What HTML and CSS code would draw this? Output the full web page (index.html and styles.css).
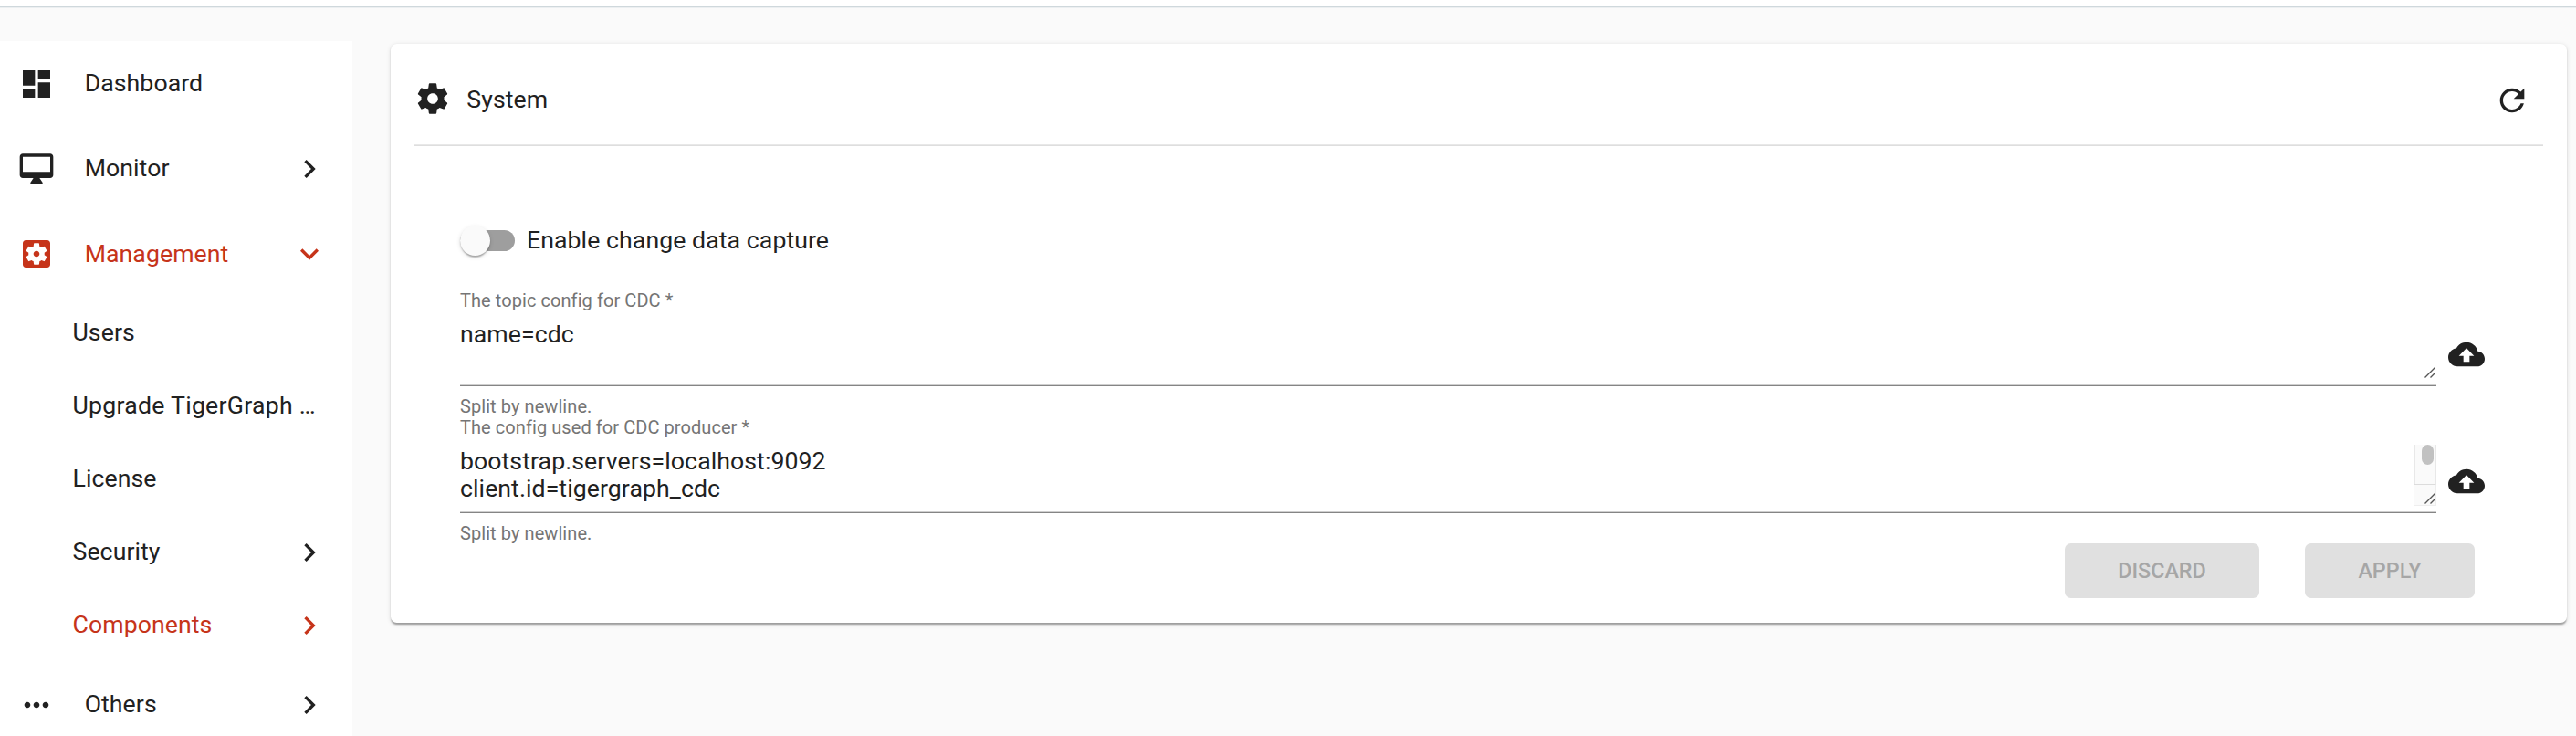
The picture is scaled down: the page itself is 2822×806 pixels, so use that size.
FILE: index.html
```html
<!DOCTYPE html>
<html lang="en">
<head>
<meta charset="utf-8">
<title>System</title>
<link rel="stylesheet" href="styles.css">
</head>
<body>
<svg class="defs" width="0" height="0">
  <symbol id="chev" viewBox="0 0 24 24"><path d="M10 6L8.59 7.41 13.17 12l-4.58 4.59L10 18l6-6z"/></symbol>
  <symbol id="down" viewBox="0 0 24 24"><path d="M16.59 8.59L12 13.17 7.41 8.59 6 10l6 6 6-6z"/></symbol>
  <symbol id="cloud" viewBox="0 0 24 24"><path d="M19.35 10.04C18.67 6.59 15.64 4 12 4 9.11 4 6.6 5.64 5.35 8.04 2.34 8.36 0 10.91 0 14c0 3.31 2.69 6 6 6h13c2.76 0 5-2.24 5-5 0-2.64-2.05-4.78-4.65-4.96zM14 13v4h-4v-4H7l5-5 5 5h-3z"/></symbol>
  <symbol id="grip" viewBox="0 0 12 12"><path d="M0.5 11.5L11.5 0.5M6.5 11.5L11.5 6.5" fill="none" stroke="#555" stroke-width="1.4"/></symbol>
</svg>
<header class="topbar"></header>
<div class="layout">
  <nav class="sidebar">
    <div class="item"><svg class="icon" viewBox="0 0 24 24"><path d="M3 13h8V3H3v10zm0 8h8v-6H3v6zm10 0h8V11h-8v10zm0-18v6h8V3h-8z"/></svg><span class="name">Dashboard</span></div>
    <div class="item"><svg class="icon" viewBox="0 0 24 24"><path d="M21 2H3c-1.1 0-2 .9-2 2v12c0 1.1.9 2 2 2h7l-2 3v1h8v-1l-2-3h7c1.1 0 2-.9 2-2V4c0-1.1-.9-2-2-2zm0 12H3V4h18v10z"/></svg><span class="name">Monitor</span><svg class="icon"><use href="#chev"/></svg></div>
    <div class="item active"><svg class="icon" viewBox="0 0 24 24"><path d="M12 10c-1.1 0-2 .9-2 2s.9 2 2 2 2-.9 2-2-.9-2-2-2zm7-7H5c-1.11 0-2 .9-2 2v14c0 1.1.89 2 2 2h14c1.11 0 2-.9 2-2V5c0-1.1-.89-2-2-2zm-1.75 9c0 .23-.02.46-.05.68l1.48 1.16c.13.11.17.3.08.45l-1.4 2.42c-.09.15-.27.21-.43.15l-1.74-.7c-.36.28-.76.51-1.18.69l-.26 1.85c-.03.17-.18.3-.35.3h-2.8c-.17 0-.32-.13-.35-.29l-.26-1.85c-.43-.18-.82-.41-1.18-.69l-1.74.7c-.16.06-.34 0-.43-.15l-1.4-2.42c-.09-.15-.05-.34.08-.45l1.48-1.16c-.03-.23-.05-.46-.05-.69 0-.23.02-.46.05-.68l-1.48-1.16c-.13-.11-.17-.3-.08-.45l1.4-2.42c.09-.15.27-.21.43-.15l1.74.7c.36-.28.76-.51 1.18-.69l.26-1.85c.03-.17.18-.3.35-.3h2.8c.17 0 .32.13.35.29l.26 1.85c.43.18.82.41 1.18.69l1.74-.7c.16-.06.34 0 .43.15l1.4 2.42c.09.15.05.34-.08.45l-1.48 1.16c.03.23.05.46.05.69z"/></svg><span class="name">Management</span><svg class="icon"><use href="#down"/></svg></div>
    <div class="item sub"><span class="name">Users</span></div>
    <div class="item sub"><span class="name wide">Upgrade TigerGraph …</span></div>
    <div class="item sub"><span class="name">License</span></div>
    <div class="item sub"><span class="name">Security</span><svg class="icon"><use href="#chev"/></svg></div>
    <div class="item sub active"><span class="name">Components</span><svg class="icon"><use href="#chev"/></svg></div>
    <div class="item"><svg class="icon" viewBox="0 0 24 24"><path d="M6 10c-1.1 0-2 .9-2 2s.9 2 2 2 2-.9 2-2-.9-2-2-2zm12 0c-1.1 0-2 .9-2 2s.9 2 2 2 2-.9 2-2-.9-2-2-2zm-6 0c-1.1 0-2 .9-2 2s.9 2 2 2 2-.9 2-2-.9-2-2-2z"/></svg><span class="name">Others</span><svg class="icon"><use href="#chev"/></svg></div>
  </nav>
  <main class="card">
    <div class="head">
      <svg class="icon" viewBox="0 0 24 24"><path d="M19.43 12.98c.04-.32.07-.64.07-.98s-.03-.66-.07-.98l2.11-1.65c.19-.15.24-.42.12-.64l-2-3.46c-.12-.22-.39-.3-.61-.22l-2.49 1c-.52-.4-1.08-.73-1.69-.98l-.38-2.65C14.46 2.18 14.25 2 14 2h-4c-.25 0-.46.18-.49.42l-.38 2.65c-.61.25-1.17.59-1.69.98l-2.49-1c-.23-.09-.49 0-.61.22l-2 3.46c-.13.22-.07.49.12.64l2.11 1.65c-.04.32-.07.65-.07.98s.03.66.07.98l-2.11 1.65c-.19.15-.24.42-.12.64l2 3.46c.12.22.39.3.61.22l2.49-1c.52.4 1.08.73 1.69.98l.38 2.65c.03.24.24.42.49.42h4c.25 0 .46-.18.49-.42l.38-2.65c.61-.25 1.17-.59 1.69-.98l2.49 1c.23.09.49 0 .61-.22l2-3.46c.12-.22.07-.49-.12-.64l-2.11-1.65zM12 15.5c-1.93 0-3.5-1.57-3.5-3.5s1.57-3.5 3.5-3.5 3.5 1.57 3.5 3.5-1.57 3.5-3.5 3.5z"/></svg>
      <span class="title">System</span>
      <svg class="icon refresh" viewBox="0 0 24 24"><path d="M17.65 6.35C16.2 4.9 14.21 4 12 4c-4.42 0-7.99 3.58-7.99 8s3.57 8 7.99 8c3.73 0 6.84-2.55 7.73-6h-2.08c-.82 2.33-3.04 4-5.65 4-3.31 0-6-2.69-6-6s2.69-6 6-6c1.66 0 3.14.69 4.22 1.78L13 11h7V4l-2.35 2.35z"/></svg>
    </div>
    <div class="content">
      <div class="toggle"><span class="track"><span class="thumb"></span></span><span>Enable change data capture</span></div>
      <div class="row">
        <div class="field">
          <div class="label">The topic config for CDC *</div>
          <div class="area"><div class="value">name=cdc</div><svg class="grip"><use href="#grip"/></svg></div>
          <div class="hint">Split by newline.</div>
        </div>
        <svg class="icon upload"><use href="#cloud"/></svg>
      </div>
      <div class="row">
        <div class="field">
          <div class="label">The config used for CDC producer *</div>
          <div class="area"><div class="value">bootstrap.servers=localhost:9092<br>client.id=tigergraph_cdc</div>
            <div class="scroll"><div class="rail"><div class="bar"></div></div><div class="corner"><svg class="grip"><use href="#grip"/></svg></div></div>
          </div>
          <div class="hint">Split by newline.</div>
        </div>
        <svg class="icon upload"><use href="#cloud"/></svg>
      </div>
      <div class="actions"><button class="btn discard" disabled>DISCARD</button><button class="btn apply" disabled>APPLY</button></div>
    </div>
  </main>
</div>
</body>
</html>
```
FILE: styles.css
```css
* { box-sizing: border-box; }
body { margin: 0; height: 806px; overflow: hidden; background: #fafafa; color: #212121; font: 400 26.667px/30px Roboto, sans-serif; letter-spacing: .07px; }
.defs { display: none; }
.topbar { height: 8px; background: #fff; border-bottom: 1px solid #cfd8dc; box-shadow: 0 1px #eceff1; }
.layout { display: flex; align-items: flex-start; height: 798px; }
.icon { width: 40px; height: 40px; flex: none; fill: currentColor; }

.sidebar { width: 386px; height: 761px; margin-top: 37px; background: #fff; overflow: hidden; }
.item { display: flex; align-items: center; height: 93.333px; padding: 0 26.667px 0 19.667px; }
.item .name { flex: 1; margin-left: 33px; padding-bottom: 1px; white-space: nowrap; }
.sub { height: 80px; padding-left: 0; }
.sub .name { margin-left: 79.5px; }
.sub .wide { letter-spacing: .25px; }
.active { color: #c6341a; }

.card { width: 2384px; height: 634px; margin: 40px 0 0 42px; padding: 0 26px; background: #fff; border-radius: 6.667px;
  box-shadow: 0 3.33px 1.67px -1.67px rgba(0,0,0,.2), 0 1.67px 1.67px 0 rgba(0,0,0,.14), 0 1.67px 5px 0 rgba(0,0,0,.12); }
.head { display: flex; align-items: center; height: 112px; padding: 9.5px 14px 0 0; border-bottom: 1px solid #dedede; box-shadow: inset 0 -1px #e8e8e8; }
.title { flex: 1; margin-left: 17.3px; padding-top: 1px; }
.refresh { margin-top: 3px; }

.content { padding: 83.3px 50px 0; }
.toggle { display: flex; align-items: center; gap: 13px; height: 40px; }
.track { position: relative; width: 60px; height: 23.33px; border-radius: 12px; background: #9e9e9e; }
.thumb { position: absolute; left: 0; top: -5px; width: 33.33px; height: 33.33px; border-radius: 50%; background: #fafafa;
  box-shadow: 0 3.3px 1.7px -1.7px rgba(0,0,0,.2), 0 1.7px 1.7px 0 rgba(0,0,0,.14), 0 1.7px 5px 0 rgba(0,0,0,.12); }

.row { display: flex; height: 139.2px; }
.toggle + .row { margin-top: 33.7px; }
.field { width: 2165px; }
.label, .hint { height: 24px; font-size: 20px; line-height: 24px; color: #757575; white-space: pre; }
.area { display: flex; justify-content: space-between; height: 82px; padding-top: 7px; border-bottom: 1px solid #858585; box-shadow: inset 0 -1px #cfcfcf; }
.value { flex: 1; padding-top: 3px; }
.grip { width: 12px; height: 12px; margin: auto 1px 8px 0; }
.hint { margin-top: 10px; }
.upload { margin: 51.3px 0 0 13.2px; }
.scroll { width: 25px; height: 67px; }
.rail { height: 43px; padding: 0 5px 0 7px; border: solid #e8e8e8; border-width: 0 2px; background: #fafafa; }
.bar { width: 13px; height: 22px; margin: 0 auto; border-radius: 7px; background: #c1c1c1; }
.corner { display: flex; height: 24px; border: 1px solid #dcdcdc; border-right-color: #eee; border-bottom-color: #eee; background: #fafafa; }
.corner .grip { margin: auto 0 1px auto; }

.actions { display: flex; justify-content: flex-end; gap: 50px; padding-right: 25px; }
.btn { height: 60px; border: 0; padding: 0; border-radius: 6.667px; background: #e0e0e0; color: #a6a6a6; font: 500 23.333px/60px Roboto, sans-serif; }
.discard { width: 213px; }
.apply { width: 186px; }
```
